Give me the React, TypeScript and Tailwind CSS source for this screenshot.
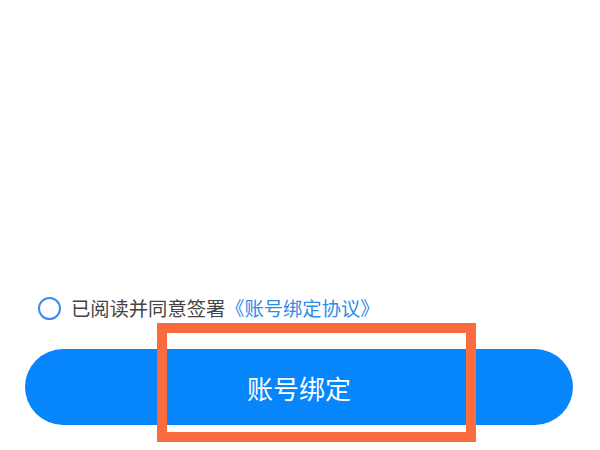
export default function App() {
    return (
        <div className="relative h-[450px] w-[600px] overflow-hidden bg-white font-['Noto_Sans_CJK_SC',sans-serif]">
            <div className="flex flex-col pt-[297px]">
                <label className="flex items-center gap-[10px] pl-[38px]">
                    <span className="h-[23px] w-[23px] rounded-full border-2 border-[#3d8af0]" />
                    <span className="text-[19.3px] leading-[23px] text-[#444444]">
                        已阅读并同意签署
                        <span className="text-[#2f8be8]">《账号绑定协议》</span>
                    </span>
                </label>
                <button className="mx-[25px] mt-[29px] flex h-[76px] w-[548px] items-center justify-center rounded-full bg-[#0785fb] text-[26px] text-white">
                    账号绑定
                </button>
            </div>
            <div className="absolute left-[157px] top-[323px] h-[119px] w-[319px] border-[10px] border-[#fa6c3e]" />
        </div>
    );
}
